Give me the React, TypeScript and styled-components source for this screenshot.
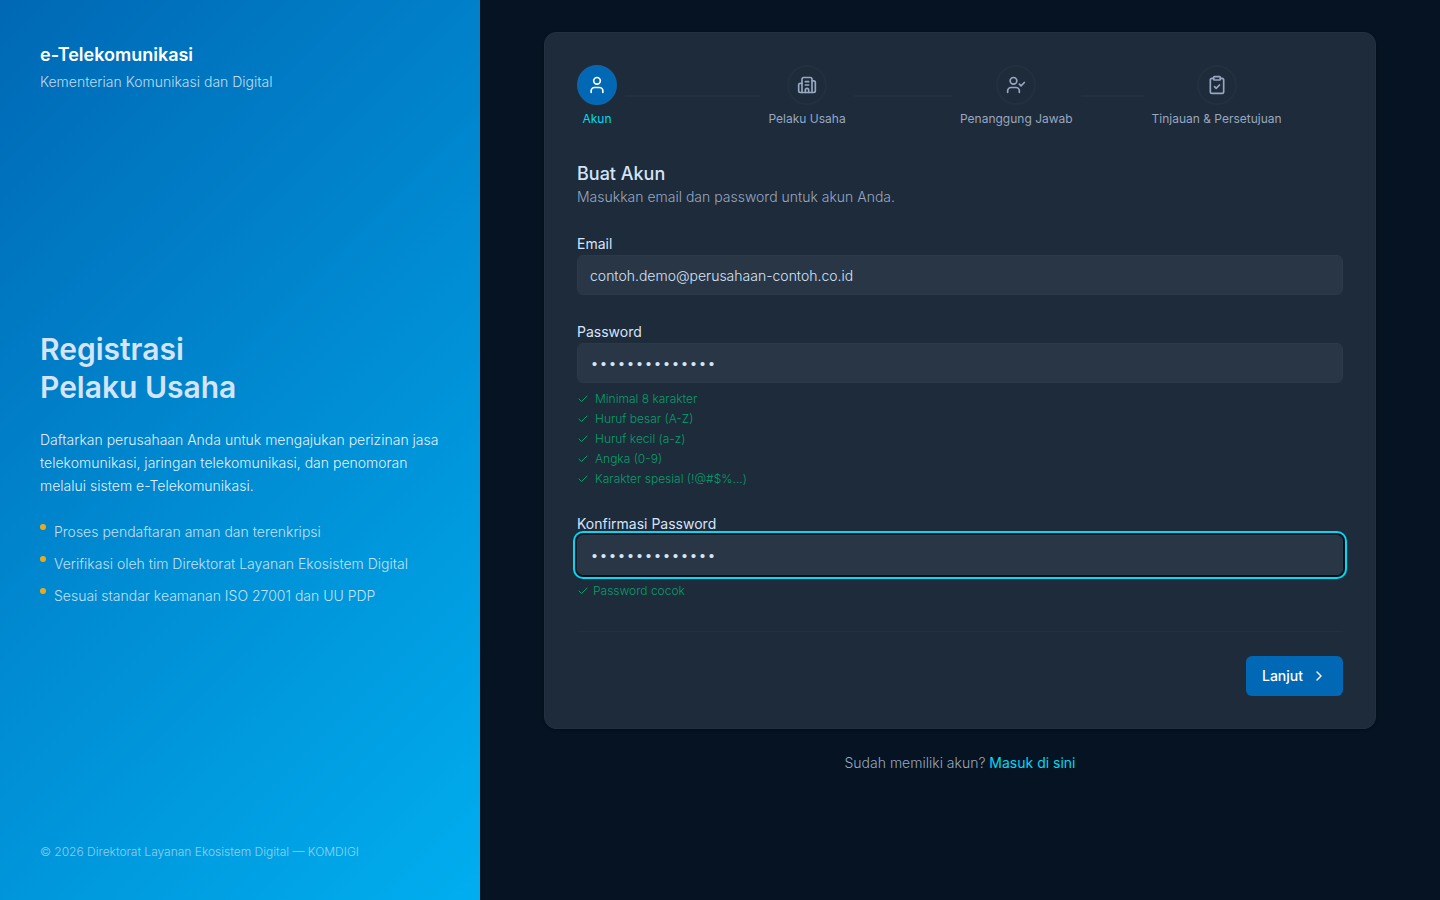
import React, { useState } from "react";
import styled, { createGlobalStyle, css } from "styled-components";
import { Building2, Check, ChevronRight, ClipboardCheck, User, UserCheck } from "lucide-react";
import type { LucideIcon } from "lucide-react";

const color = {
  page: "#051322",
  card: "#1e2b3a",
  line: "#233040",
  field: "#293646",
  fieldLine: "#2c3949",
  text: "#d4e4fa",
  muted: "#98a7c0",
  cyan: "#00daf3",
  blue: "#0068b5",
  sky: "#00aeef",
  green: "#069e6c",
  amber: "#eba91f",
};

const GlobalStyle = createGlobalStyle`
  *, *::before, *::after { box-sizing: border-box; }
  body {
    margin: 0;
    background: ${color.page};
    color: ${color.text};
    font-family: Inter, "Liberation Sans", sans-serif;
    font-size: 14px;
    font-weight: 300;
    line-height: 20px;
  }
  h1, h2, p, ul, ol { margin: 0; padding: 0; }
  ul, ol { list-style: none; }
`;

const Page = styled.div`
  display: grid;
  grid-template-columns: 1fr 2fr;
  min-height: 100vh;
`;

const Aside = styled.aside`
  display: flex;
  flex-direction: column;
  justify-content: space-between;
  padding: 40px;
  background: linear-gradient(135deg, ${color.blue}, ${color.sky});
`;

const Brand = styled.p`
  margin-bottom: 2px;
  color: #fff;
  font-size: 18px;
  font-weight: 600;
  line-height: 30px;
`;

const Ministry = styled.p`
  color: rgba(255, 255, 255, 0.75);
`;

const Pitch = styled.div`
  padding-top: 2px;
`;

const Headline = styled.h1`
  margin-bottom: 22px;
  font-size: 30px;
  font-weight: 600;
  line-height: 38px;
`;

const Intro = styled.p`
  margin-bottom: 23px;
  color: rgba(255, 255, 255, 0.9);
  line-height: 23px;
`;

const Points = styled.ul`
  display: grid;
  gap: 8px;
`;

const Point = styled.li`
  display: flex;
  gap: 8px;
  color: rgba(255, 255, 255, 0.75);
  line-height: 24px;

  &::before {
    content: "";
    flex: none;
    width: 6px;
    height: 6px;
    margin-top: 4px;
    border-radius: 50%;
    background: ${color.amber};
  }
`;

const Copyright = styled.p`
  color: rgba(255, 255, 255, 0.55);
  font-size: 12px;
  line-height: 16px;
`;

const Main = styled.main`
  display: flex;
  flex-direction: column;
  gap: 24px;
  padding: 32px 64px;
`;

const Card = styled.section`
  padding: 32px;
  border: 1px solid ${color.line};
  border-radius: 12px;
  background: ${color.card};
  box-shadow: 0 1px 3px rgba(0, 0, 0, 0.3);
`;

const Steps = styled.ol`
  display: grid;
  grid-template-columns: repeat(4, 1fr);
  margin-bottom: 34px;
`;

const StepItem = styled.li`
  display: flex;
  align-items: center;
  min-width: 0;

  &:not(:last-child)::after {
    content: "";
    flex: 1;
    height: 2px;
    margin: 0 8px;
    border-radius: 1px;
    background: ${color.line};
  }
`;

const StepBody = styled.div<{ $active: boolean }>`
  display: flex;
  flex-direction: column;
  align-items: center;
  gap: 6px;
  color: ${(p) => (p.$active ? color.cyan : color.muted)};
  font-size: 12px;
  font-weight: 400;
  line-height: 16px;
  white-space: nowrap;
`;

const StepIcon = styled.span<{ $active: boolean }>`
  display: grid;
  place-items: center;
  width: 40px;
  height: 40px;
  border: 2px solid ${(p) => (p.$active ? "#0d66ac" : color.line)};
  border-radius: 50%;
  background: ${(p) => (p.$active ? color.blue : "transparent")};
  color: ${(p) => (p.$active ? "#fff" : color.muted)};
`;

const FormTitle = styled.h2`
  font-size: 18px;
  font-weight: 500;
  line-height: 26px;
`;

const FormHint = styled.p`
  color: ${color.muted};
`;

const Form = styled.form`
  display: flex;
  flex-direction: column;
  gap: 24px;
  margin-top: 24px;
`;

const FieldGroup = styled.div`
  display: flex;
  flex-direction: column;
`;

const Label = styled.label`
  padding-top: 2px;
  font-weight: 400;
  line-height: 22px;
`;

const ring = css`
  outline: none;
  box-shadow: 0 0 0 2px ${color.page}, 0 0 0 4px ${color.cyan};
`;

const Input = styled.input<{ $ring?: boolean }>`
  width: 100%;
  height: 40px;
  padding: 0 12px;
  border: 1px solid ${color.fieldLine};
  border-radius: 6px;
  background: ${color.field};
  color: ${color.text};
  font: inherit;
  ${(p) => p.$ring && ring}

  &[type="password"] {
    padding-top: 4px;
    font-family: "Liberation Mono", monospace;
    font-size: 15px;
  }

  &:focus-visible {
    ${ring}
  }
`;

const Checks = styled.ul`
  display: grid;
  gap: 4px;
  margin-top: 8px;
`;

const CheckLine = styled.li<{ $tight?: boolean }>`
  display: flex;
  align-items: center;
  gap: ${(p) => (p.$tight ? 4 : 6)}px;
  color: ${color.green};
  font-size: 12px;
  line-height: 16px;
`;

const Actions = styled.div`
  display: flex;
  justify-content: flex-end;
  margin-top: 8px;
  padding-top: 24px;
  border-top: 1px solid ${color.line};
`;

const NextButton = styled.button`
  display: inline-flex;
  align-items: center;
  gap: 8px;
  height: 40px;
  padding: 0 16px;
  border: 0;
  border-radius: 6px;
  background: ${color.blue};
  color: #fff;
  font: inherit;
  font-weight: 500;
  cursor: pointer;
`;

const SignIn = styled.p`
  color: ${color.muted};
  text-align: center;
`;

const SignInLink = styled.a`
  color: ${color.cyan};
  font-weight: 400;
  text-decoration: none;
`;

const points = [
  "Proses pendaftaran aman dan terenkripsi",
  "Verifikasi oleh tim Direktorat Layanan Ekosistem Digital",
  "Sesuai standar keamanan ISO 27001 dan UU PDP",
];

const steps: { label: string; icon: LucideIcon }[] = [
  { label: "Akun", icon: User },
  { label: "Pelaku Usaha", icon: Building2 },
  { label: "Penanggung Jawab", icon: UserCheck },
  { label: "Tinjauan & Persetujuan", icon: ClipboardCheck },
];

const rules = [
  "Minimal 8 karakter",
  "Huruf besar (A-Z)",
  "Huruf kecil (a-z)",
  "Angka (0-9)",
  "Karakter spesial (!@#$%...)",
];

export default function App() {
  const [email, setEmail] = useState("contoh.demo@perusahaan-contoh.co.id");
  const [password, setPassword] = useState("ContohDemo#123");
  const [confirm, setConfirm] = useState("ContohDemo#123");

  return (
    <>
      <GlobalStyle />
      <Page>
        <Aside>
          <header>
            <Brand>e-Telekomunikasi</Brand>
            <Ministry>Kementerian Komunikasi dan Digital</Ministry>
          </header>
          <Pitch>
            <Headline>
              Registrasi
              <br />
              Pelaku Usaha
            </Headline>
            <Intro>
              Daftarkan perusahaan Anda untuk mengajukan perizinan jasa telekomunikasi, jaringan
              telekomunikasi, dan penomoran melalui sistem e-Telekomunikasi.
            </Intro>
            <Points>
              {points.map((point) => (
                <Point key={point}>{point}</Point>
              ))}
            </Points>
          </Pitch>
          <Copyright>© 2026 Direktorat Layanan Ekosistem Digital — KOMDIGI</Copyright>
        </Aside>

        <Main>
          <Card>
            <Steps>
              {steps.map(({ label, icon: Icon }, i) => (
                <StepItem key={label} aria-current={i === 0 ? "step" : undefined}>
                  <StepBody $active={i === 0}>
                    <StepIcon $active={i === 0}>
                      <Icon size={20} />
                    </StepIcon>
                    {label}
                  </StepBody>
                </StepItem>
              ))}
            </Steps>

            <FormTitle>Buat Akun</FormTitle>
            <FormHint>Masukkan email dan password untuk akun Anda.</FormHint>

            <Form onSubmit={(e) => e.preventDefault()}>
              <FieldGroup>
                <Label htmlFor="email">Email</Label>
                <Input
                  id="email"
                  type="email"
                  value={email}
                  onChange={(e) => setEmail(e.target.value)}
                />
              </FieldGroup>
              <FieldGroup>
                <Label htmlFor="password">Password</Label>
                <Input
                  id="password"
                  type="password"
                  value={password}
                  onChange={(e) => setPassword(e.target.value)}
                />
                <Checks>
                  {rules.map((rule) => (
                    <CheckLine key={rule}>
                      <Check size={12} strokeWidth={2} />
                      {rule}
                    </CheckLine>
                  ))}
                </Checks>
              </FieldGroup>
              <FieldGroup>
                <Label htmlFor="confirm">Konfirmasi Password</Label>
                <Input
                  id="confirm"
                  type="password"
                  $ring
                  value={confirm}
                  onChange={(e) => setConfirm(e.target.value)}
                />
                <Checks>
                  <CheckLine $tight>
                    <Check size={12} strokeWidth={2} />
                    Password cocok
                  </CheckLine>
                </Checks>
              </FieldGroup>
              <Actions>
                <NextButton type="submit">
                  Lanjut
                  <ChevronRight size={16} />
                </NextButton>
              </Actions>
            </Form>
          </Card>
          <SignIn>
            Sudah memiliki akun? <SignInLink href="#masuk">Masuk di sini</SignInLink>
          </SignIn>
        </Main>
      </Page>
    </>
  );
}
